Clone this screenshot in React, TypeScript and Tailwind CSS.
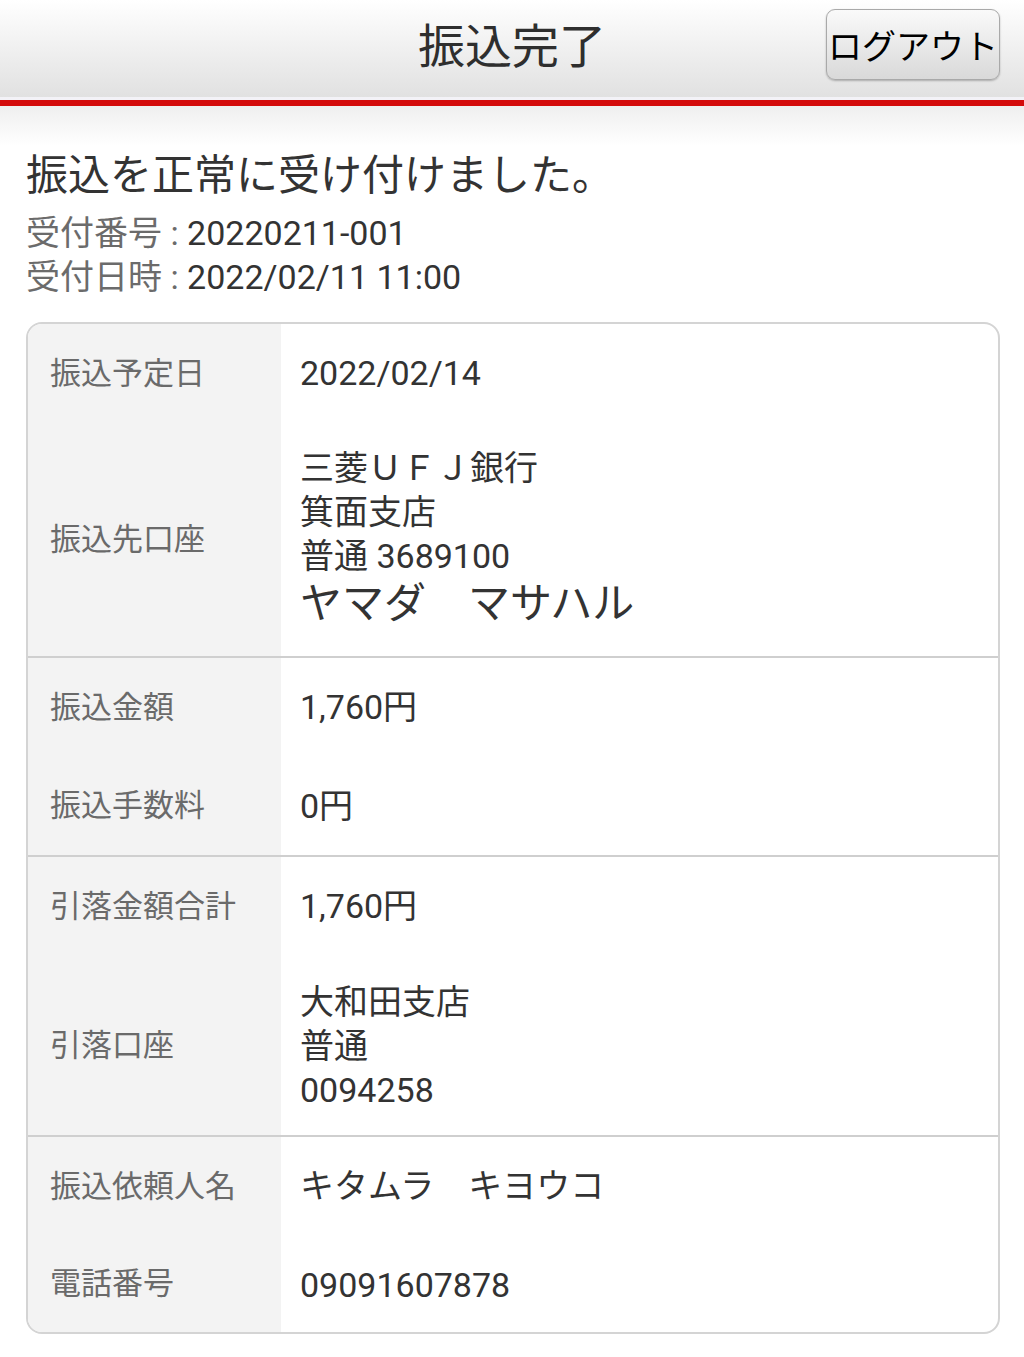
import React from 'react';

type Row = {
  label: string;
  lines: string[];
  big?: string;
  pad?: string;
};

const groups: Row[][] = [
  [
    { label: '振込予定日', lines: ['2022/02/14'] },
    {
      label: '振込先口座',
      lines: ['三菱ＵＦＪ銀行', '箕面支店', '普通 3689100'],
      big: 'ヤマダ　マサハル',
      pad: 'pt-[23px] pb-[26px]',
    },
  ],
  [
    { label: '振込金額', lines: ['1,760円'] },
    { label: '振込手数料', lines: ['0円'], pad: 'pt-[27px] pb-[27px]' },
  ],
  [
    { label: '引落金額合計', lines: ['1,760円'] },
    { label: '引落口座', lines: ['大和田支店', '普通', '0094258'], pad: 'pt-[24px] pb-[23px]' },
  ],
  [
    { label: '振込依頼人名', lines: ['キタムラ　キヨウコ'] },
    { label: '電話番号', lines: ['09091607878'], pad: 'pt-[27px] pb-[25px]' },
  ],
];

export default function App() {
  return (
    <div
      className="min-h-[1357px] bg-white text-[#333]"
      style={{ fontFamily: 'Roboto, "Noto Sans CJK JP", sans-serif' }}
    >
      {/* header */}
      <header className="relative h-[97px] pb-[12px] bg-gradient-to-b from-white to-[#e1e1e1] flex items-center justify-center">
        <h1
          className="text-[47px] leading-none text-[#2e2e2e]"
          style={{ fontFamily: '"Noto Sans CJK JP", sans-serif' }}
        >
          振込完了
        </h1>
        <button
          className="absolute right-[24px] top-[9px] w-[174px] h-[71px] rounded-[9px] border border-[#a9a9a9] bg-gradient-to-b from-[#fafafa] to-[#d9d9d9] shadow-[0_1px_2px_rgba(0,0,0,0.25)] text-[34px] leading-none text-black flex items-center justify-center"
          style={{ fontFamily: '"Noto Sans CJK JP", sans-serif' }}
        >
          ログアウト
        </button>
      </header>
      <div className="h-[3px] bg-[#f3f2f7]" />
      <div className="h-[6px] bg-[#d40b0b]" />

      <main className="bg-gradient-to-b from-[#efefef] to-white to-[40px] pl-[26px] pr-[24px] pt-[46px] pb-[24px]">
        <p className="text-[42px] leading-[48px] text-[#333]">振込を正常に受け付けました。</p>
        <div className="mt-[11px] text-[34px] leading-[44px]">
          <p>
            <span className="text-[#6b6b6b]">受付番号 : </span>20220211-001
          </p>
          <p>
            <span className="text-[#6b6b6b]">受付日時 : </span>2022/02/11 11:00
          </p>
        </div>

        <div className="mt-[23px] rounded-[16px] border-2 border-[#d4d4d4] overflow-hidden">
          {groups.map((g, gi) => (
            <div key={gi} className={gi > 0 ? 'border-t-2 border-[#cfcfcf]' : ''}>
              {g.map((r) => (
                <div key={r.label} className="grid grid-cols-[253px_1fr]">
                  <div className="bg-[#f3f3f3] flex items-center pl-[22px] text-[31px] text-[#6a6a6a] leading-[44px]">
                    {r.label}
                  </div>
                  <div className={`pl-[19px] pr-4 text-[34px] leading-[44px] text-[#333] ${r.pad ?? 'pt-[27px] pb-[28px]'}`}>
                    {r.lines.map((l) => (
                      <div key={l}>{l}</div>
                    ))}
                    {r.big && <div className="text-[42px] leading-[52px]">{r.big}</div>}
                  </div>
                </div>
              ))}
            </div>
          ))}
        </div>
      </main>
    </div>
  );
}
